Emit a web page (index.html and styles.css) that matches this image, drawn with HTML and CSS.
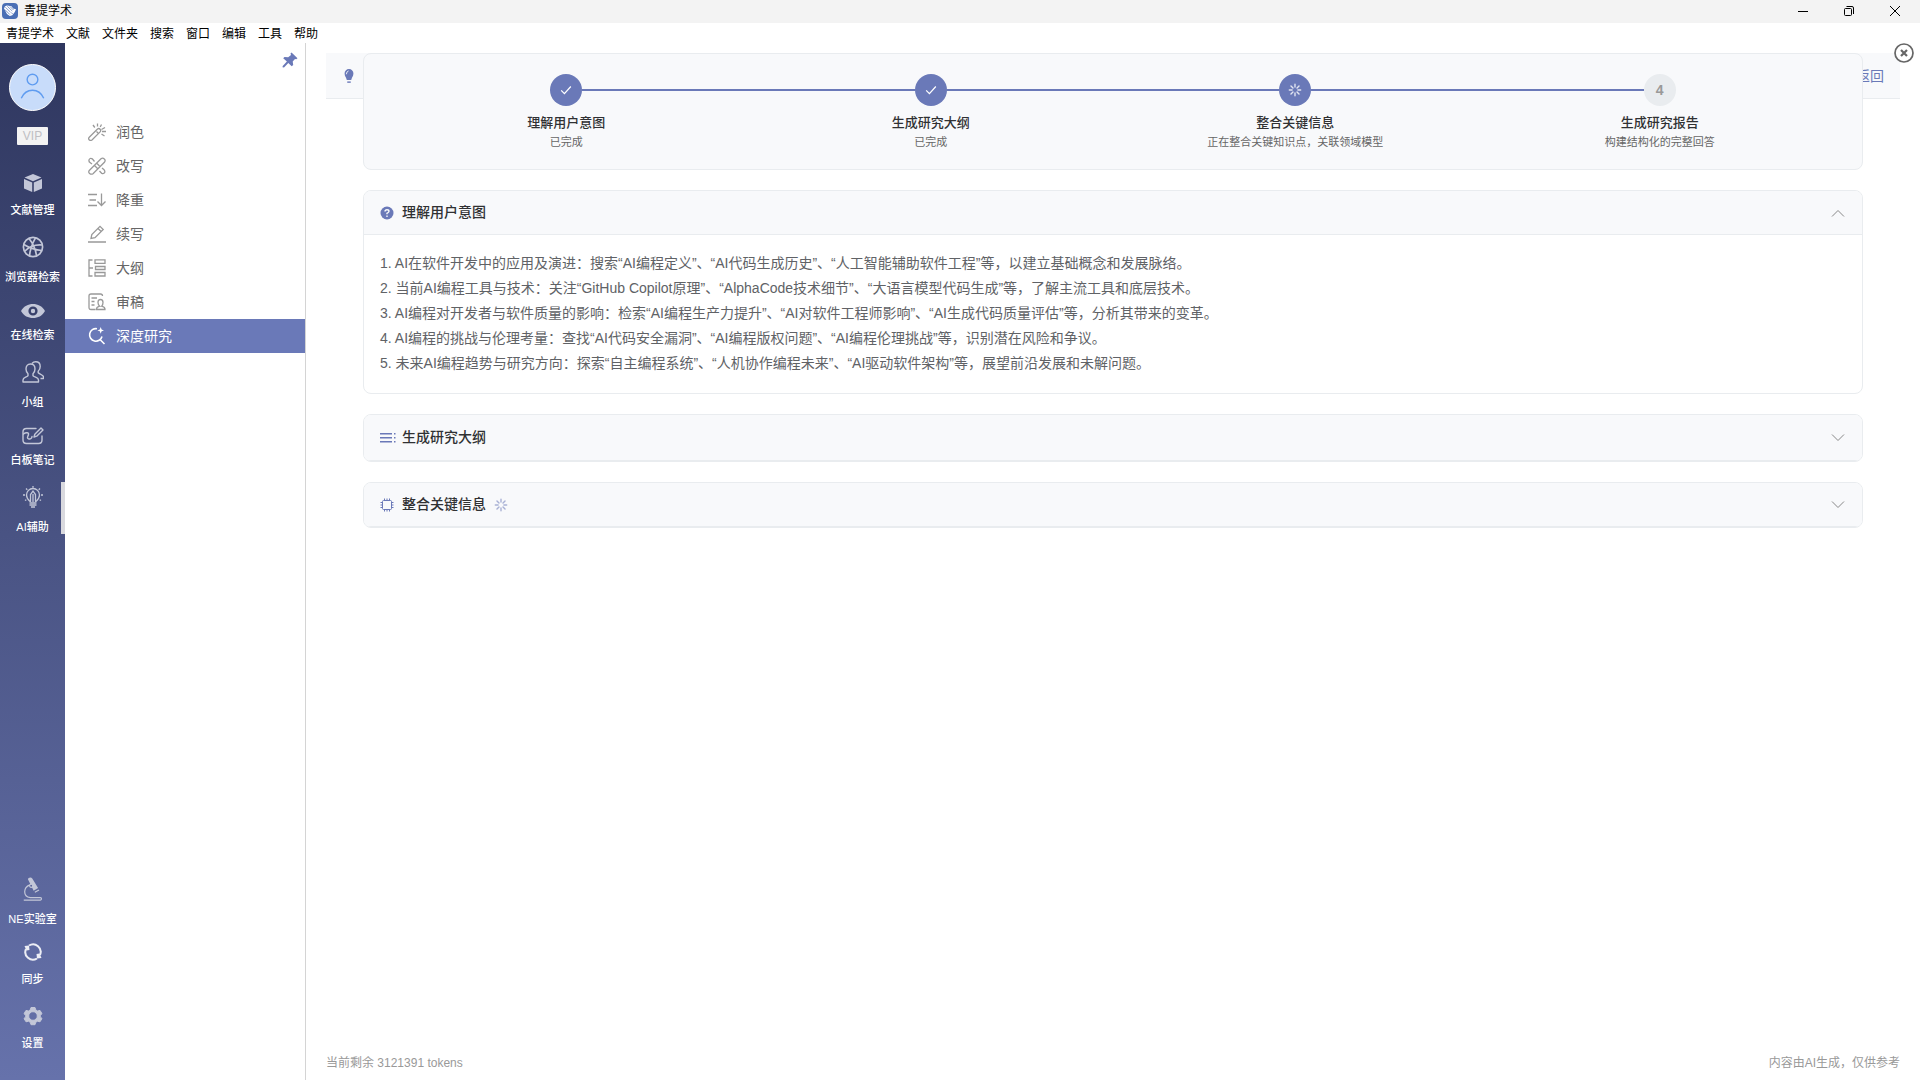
FILE: index.html
```html
<!DOCTYPE html>
<html lang="zh-CN">
<head>
<meta charset="utf-8">
<meta name="viewport" content="width=device-width, initial-scale=1">
<title>青提学术</title>
<link rel="stylesheet" href="styles.css">
</head>
<body>
<svg class="sprite" aria-hidden="true">
  <symbol id="spinner" viewBox="0 0 16 16">
    <g fill="none" stroke="currentColor" stroke-width="1.600" stroke-linecap="round" opacity=".8">
      <path d="M8 1.500v3.200M8 11.300v3.200M1.500 8h3.200M11.300 8h3.200M3.400 3.400l2.300 2.300M10.300 10.300l2.300 2.300M3.400 12.600l2.300-2.300M10.300 5.700l2.300-2.300"/>
    </g>
  </symbol>
  <symbol id="check" viewBox="0 0 16 16">
    <path d="M2.500 8.500l3.700 3.700L13.500 4" fill="none" stroke="currentColor" stroke-width="1.400"/>
  </symbol>
  <symbol id="chevron" viewBox="0 0 16 16">
    <path d="M2 4.500l6 6 6-6" fill="none" stroke="currentColor" stroke-width="1"/>
  </symbol>
</svg>

<header class="titlebar">
  <svg class="app-logo" viewBox="0 0 16 16"><rect width="16" height="16" rx="4" fill="#4a6fb5"/><path d="M2 5.500L3 3.300l2-.8 4.500.7 1.700 2.300 2.800.8L12.800 9l-2.500 3.200-2.500.8L5 11z" fill="#fff"/><path d="M3.300 4.200l5.200 5M5.300 3.300l5 4.700M2.800 6.500l5 5M8 3.500l3.500 3.500M9.300 9.800l1.500 1" stroke="#4a6fb5" stroke-width=".7"/></svg>
  <span class="app-name">青提学术</span>
  <div class="window-controls">
    <button type="button" aria-label="最小化"><svg viewBox="0 0 12 12"><path d="M1 6.500h10" /></svg></button>
    <button type="button" aria-label="还原"><svg viewBox="0 0 12 12"><rect x="1.500" y="3.500" width="7" height="7" rx="1"/><path d="M3.500 1.500h5.500q1.500 0 1.500 1.500v6"/></svg></button>
    <button type="button" aria-label="关闭"><svg viewBox="0 0 12 12"><path d="M1 1l10 10M11 1L1 11"/></svg></button>
  </div>
</header>

<nav class="menubar" aria-label="菜单">
  <button type="button">青提学术</button>
  <button type="button">文献</button>
  <button type="button">文件夹</button>
  <button type="button">搜索</button>
  <button type="button">窗口</button>
  <button type="button">编辑</button>
  <button type="button">工具</button>
  <button type="button">帮助</button>
</nav>

<div class="workspace">
  <aside class="sidebar">
    <button class="avatar" type="button" aria-label="账户"><svg viewBox="0 0 48 48"><g fill="none" stroke="#5f9cf0" stroke-width="1.500"><circle cx="24" cy="15.500" r="5.700"/><path d="M12 35.500C14.500 30 19 27 24 27s9.500 3 12 8.500"/></g></svg></button>
    <span class="vip">VIP</span>
    <nav class="side-group" aria-label="主导航">
      <a class="side-item mid" href="#library">
        <svg width="18" height="18" viewBox="0 0 18 18" fill="currentColor"><path d="M9 0l8.500 3.500L9 7.200.5 3.500zM0 5l8.200 3.600V18L0 14.500zM18 5L9.800 8.600V18l8.200-3.500z"/></svg>
        <span>文献管理</span></a>
      <a class="side-item tall" href="#browser">
        <svg width="22" height="22" viewBox="0 0 22 22" fill="none" stroke="currentColor" stroke-width="1.700"><circle cx="11" cy="11" r="9.600"/><path d="M13.500 1.800C10 8 8 13 7.500 20M1.800 8.500c5 3 11 5.500 18 6M7 2.500c4 5 6.500 10 7.500 17M20 9c-6-.5-12 1-17 6"/></svg>
        <span>浏览器检索</span></a>
      <a class="side-item" href="#online">
        <svg width="24" height="16" viewBox="0 0 24 16"><path d="M0 8C3 3 7 1 12 1s9 2 12 7c-3 5-7 7-12 7S3 13 0 8z" fill="currentColor"/><circle cx="12" cy="8" r="3.400" fill="none" stroke="#38406b" stroke-width="2.400"/></svg>
        <span>在线检索</span></a>
      <a class="side-item tall" href="#group">
        <svg width="22" height="22" viewBox="0 0 22 22" fill="none" stroke="currentColor" stroke-width="1.400" stroke-linejoin="round"><path d="M8.500 3C5.500 3 4 5 4 8c0 2 .8 3.600 2 4.700v2C4 16.500 1 16.500 1 19v2h15.500v-2c0-2.500-3.500-2.500-5.500-4.300v-2C12.200 11.600 13 10 13 8c0-3-1.500-5-4.500-5z"/><path d="M10 2.500C11 1.300 12.300.8 13.700.8c3 0 4.500 2 4.500 4.700 0 2-.8 3.700-2 4.700v1.600c1.500 1.700 5.300 1.700 5.300 4.200v1.500h-3"/></svg>
        <span>小组</span></a>
      <a class="side-item" href="#whiteboard">
        <svg width="22" height="18" viewBox="0 0 22 18" fill="none" stroke="currentColor" stroke-width="1.400" stroke-linecap="round" stroke-linejoin="round"><path d="M14 1.500H4.500Q1 1.500 1 5v8q0 3.500 3.500 3.500h12Q20 16.500 20 13V9"/><path d="M1.500 7C4 5 7 5.500 6.500 7.500S4.500 11 6.500 11.800 10 11 10 9.500M12 10l.8-2.800L19 1l2 2-6.300 6.200z"/></svg>
        <span>白板笔记</span></a>
      <a class="side-item tall active" href="#ai" aria-current="page">
        <svg width="22" height="22" viewBox="0 0 22 22" fill="none" stroke="currentColor" stroke-width="1.300"><path d="M8 15.500C5.800 13.500 4.500 11.500 4.500 9a6.500 6.500 0 0 1 13 0c0 2.500-1.300 4.500-3.500 6.500"/><path d="M8.500 16V8.500L11 5l2.500 3.500V16M11 8v8M7.500 17h7M7.500 19h7M9 21h4"/><path d="M11 0v1.700M1 9h2M19 9h2M4 2.500l1.300 1.300M18 2.500l-1.300 1.300M3 14.500l1.300-.8M19 14.500l-1.300-.8"/></svg>
        <span>AI辅助</span></a>
    </nav>
    <nav class="side-group bottom" aria-label="工具">
      <a class="side-item tall" href="#lab">
        <svg width="20" height="26" viewBox="0 0 20 26"><path d="M4.500 2.500C4.500.5 8-.5 9.200 1.500L15.500 12l-4.800 2.800z" fill="currentColor"/><g fill="none" stroke="currentColor" stroke-width="1.300"><path d="M12 16.500l4.500-2.500M6.500 8.500C3 10 1 12.700 1 16c0 3.500 2.500 5.800 6 6.300h11q1.200 0 1.200 1.300T18 25H0"/><circle cx="8" cy="9.500" r="1.700" fill="#5a659b"/></g></svg>
        <span>NE实验室</span></a>
      <a class="side-item mid bright" href="#sync">
        <svg width="18" height="18" viewBox="0 0 18 18"><path d="M5 2.500A7.600 7.600 0 0 1 16 12M13 15.500A7.600 7.600 0 0 1 2 6" fill="none" stroke="currentColor" stroke-width="2"/><path d="M.5 3L5 2.500l.5 4.500-3 .5zM17.500 15l-4.500.5-.5-4.500 3-.5z" fill="currentColor"/></svg>
        <span>同步</span></a>
      <a class="side-item mid spaced" href="#settings">
        <svg width="20" height="20" viewBox="0 0 20 20"><path fill="currentColor" stroke="currentColor" stroke-linejoin="round" fill-rule="evenodd" d="M8 1.500h4l.8 2.500 1.700 1 2.500-.6 2 3.300-1.700 1.600v1.600l1.700 1.600-2 3.300-2.500-.6-1.700 1-.8 2.500H8l-.8-2.500-1.700-1-2.500.6-2-3.300 1.700-1.600V9.300L1 7.700l2-3.300 2.500.6 1.700-1zM10 5.700a4.300 4.300 0 1 0 0 8.600 4.300 4.300 0 0 0 0-8.600z"/></svg>
        <span>设置</span></a>
    </nav>
  </aside>

  <aside class="toolnav">
    <button class="pin" type="button" aria-label="固定"><svg viewBox="0 0 16 16" fill="currentColor"><path d="M9.500.5l6 5.700-1.300 1-1.200-.3-2.300 2.600.5 3.500-1.500 1.300-3.400-3.400L2 15.500.5 15.300.7 14l4.200-4.500L1.200 6.300 2.500 5l3.700.3L9 3 8.500 1.500z"/></svg></button>
    <nav class="tool-list" aria-label="AI辅助">
      <a href="#polish"><svg viewBox="0 0 18 18"><path d="M1 14.500L9.500 6q1.500-1 2.600.2t.2 2.500L4 17q-1.500 1-2.700-.1T1 14.500zM8.500 8.500l1.500 1.500M5 2l1.800 2.500M9.500.5V3.500M13.500 1.500l-1.300 2.500M13.500 6.500L17 4.500M14 8.500h4M13.500 11l3 2"/></svg>润色</a>
      <a href="#rewrite"><svg viewBox="0 0 18 18"><path d="M1.500 13.300L13 1.700q1.700-1.200 3.300.2t.1 3.400L5 16.700q-1.700 1.100-3.400-.3t-.1-3.100zM6.500 4.500L4.300 1.800Q1.800.6 1 3q-.3 1.700 1 2.500l2 1.500M11.500 14l2.300 2.500q2.200.7 3-1.200.3-1.600-1-2.800L14 11M6.500 8.500l3 3M9 6.500l2.500 2.500"/></svg>改写</a>
      <a href="#reduce"><svg viewBox="0 0 18 18"><path d="M0 3.500h9M1.500 9H8M0 14.500h9M13.500 2.500v12M9.500 10.500l4 4 4-4"/></svg>降重</a>
      <a href="#continue"><svg viewBox="0 0 18 18"><path d="M3 13.500l.8-4L12 1.300l3.200 3.200L7 12.700zM10 3.500l3.200 3M0 17h18"/></svg>续写</a>
      <a href="#outline"><svg viewBox="0 0 18 18"><path d="M4.500 1H1v16h3.500M1 9h4M7 .8h10v3.500H7zM7.500 7.500H17v3H7.500zM7 13.500h10V17H7z"/></svg>大纲</a>
      <a href="#review"><svg viewBox="0 0 18 18"><path d="M7.500 16.500H3q-2 0-2-2V3q0-2 2-2h9.500q2 0 2 2M3.500 5H9M3.500 8.500h3M3.500 12h3M8.500 16.500q-.3-2.300 3.200-3.300Q10 11.800 10 9.500 10 6.500 12.500 6.500T15 9.500q0 2.300-1.300 3.700 3.500 1 3.300 3.300z"/></svg>审稿</a>
      <a class="selected" href="#research" aria-current="page"><svg viewBox="0 0 18 18"><path d="M9 1.700A6.300 6.300 0 1 0 14 9.500M12 12.500l4.500 4.500" stroke-width="1.600"/><path d="M12.700 0l.9 2.500 2.400.9-2.400.9-.9 2.500-.9-2.500-2.400-.9 2.400-.9z" fill="currentColor" stroke="none"/></svg>深度研究</a>
    </nav>
  </aside>

  <main class="main">
    <button class="close-panel" type="button" aria-label="关闭面板"><svg viewBox="0 0 20 20"><circle cx="10" cy="10" r="9" fill="#fff" stroke="#666" stroke-width="1.700"/><path d="M7 7l6 6M13 7l-6 6" stroke="#666" stroke-width="2.200"/></svg></button>
    <div class="stage">
      <div class="topbar">
        <svg class="bulb" viewBox="0 0 14 16"><path d="M7 0a5 5 0 0 1 5 5.400c0 2.500-1.500 3.700-2 5.800L9.500 12.500h-5L4 11.200C3.500 9.100 2 7.900 2 5.400A5 5 0 0 1 7 0z" fill="currentColor"/><path d="M4 6q0-3 2.500-3.800" fill="none" stroke="#f8f9fb"/><path d="M5 15h4" stroke="currentColor" stroke-width="1.600"/></svg>
        <a class="back" href="#back">返回</a>
      </div>
      <div class="content">
        <ol class="steps card">
          <li class="step"><div class="rail"><span class="dot done"><svg><use href="#check"/></svg></span></div><strong>理解用户意图</strong><small>已完成</small></li>
          <li class="step"><div class="rail"><span class="dot done"><svg><use href="#check"/></svg></span></div><strong>生成研究大纲</strong><small>已完成</small></li>
          <li class="step"><div class="rail"><span class="dot done"><svg><use href="#spinner"/></svg></span></div><strong>整合关键信息</strong><small>正在整合关键知识点，关联领域模型</small></li>
          <li class="step"><div class="rail"><span class="dot">4</span></div><strong>生成研究报告</strong><small>构建结构化的完整回答</small></li>
        </ol>

        <section class="card">
          <button class="card-head" type="button" aria-expanded="true">
            <svg class="head-icon" viewBox="0 0 14 14"><circle cx="7" cy="7" r="6.500" fill="currentColor"/><path d="M5 5.500Q5 3.700 7 3.700t2 1.600Q9 6.300 7 7.300v1M7 9.500V11" fill="none" stroke="#f8f9fb" stroke-width="1.400"/></svg>
            <span class="head-title">理解用户意图</span>
            <svg class="chevron up"><use href="#chevron"/></svg>
          </button>
          <div class="card-body">
            <p>1. AI在软件开发中的应用及演进：搜索“AI编程定义”、“AI代码生成历史”、“人工智能辅助软件工程”等，以建立基础概念和发展脉络。</p>
            <p>2. 当前AI编程工具与技术：关注“GitHub Copilot原理”、“AlphaCode技术细节”、“大语言模型代码生成”等，了解主流工具和底层技术。</p>
            <p>3. AI编程对开发者与软件质量的影响：检索“AI编程生产力提升”、“AI对软件工程师影响”、“AI生成代码质量评估”等，分析其带来的变革。</p>
            <p>4. AI编程的挑战与伦理考量：查找“AI代码安全漏洞”、“AI编程版权问题”、“AI编程伦理挑战”等，识别潜在风险和争议。</p>
            <p>5. 未来AI编程趋势与研究方向：探索“自主编程系统”、“人机协作编程未来”、“AI驱动软件架构”等，展望前沿发展和未解问题。</p>
          </div>
        </section>

        <section class="card">
          <button class="card-head large" type="button" aria-expanded="false">
            <svg class="head-icon" viewBox="0 0 16 16"><g fill="currentColor"><path d="M0 3h12v1.500H0zM0 7h12v1.500H0zM0 11h12v1.500H0zM14 3h1.500v1.500H14zM14 7h1.500v1.500H14zM14 11h1.500v1.500H14z"/></g></svg>
            <span class="head-title">生成研究大纲</span>
            <svg class="chevron"><use href="#chevron"/></svg>
          </button>
        </section>

        <section class="card">
          <button class="card-head" type="button" aria-expanded="false">
            <svg class="head-icon" viewBox="0 0 14 14"><rect x="2.500" y="2.500" width="9" height="9" rx="1" fill="none" stroke="currentColor"/><path d="M4.500.5V2M7 .5V2M9.500.5V2M4.500 12v1.500M7 12v1.500M9.500 12v1.500M.5 4.500H2M.5 7H2M.5 9.500H2M12 4.500h1.500M12 7h1.500M12 9.500h1.500" stroke="currentColor"/></svg>
            <span class="head-title">整合关键信息</span>
            <svg class="busy"><use href="#spinner"/></svg>
            <svg class="chevron"><use href="#chevron"/></svg>
          </button>
        </section>
      </div>
    </div>
    <footer class="status">
      <span>当前剩余 3121391 tokens</span>
      <span>内容由AI生成，仅供参考</span>
    </footer>
  </main>
</div>
</body>
</html>
```
FILE: styles.css
```css
:root {
  --accent: #6a79b8;
  --panel: #f8f9fb;
  --line: #e9ecef;
  --text: #303133;
  --muted: #606266;
}

* {
  box-sizing: border-box;
}

body {
  margin: 0;
  min-height: 100vh;
  display: flex;
  flex-direction: column;
  background: #fff;
  color: #000;
  font: 12px/16px "Liberation Sans", "Noto Sans CJK SC", sans-serif;
}

button {
  padding: 0;
  border: 0;
  background: none;
  color: inherit;
  font: inherit;
}

a {
  color: inherit;
  text-decoration: none;
}

svg {
  display: block;
  flex: none;
}

.sprite {
  position: absolute;
  width: 0;
  height: 0;
}

/* Window frame */
.titlebar {
  display: flex;
  align-items: center;
  gap: 6px;
  height: 23px;
  padding: 0 2px 2px;
  background: #f3f3f3;
}

.app-logo {
  width: 16px;
  height: 16px;
}

.window-controls {
  display: flex;
  margin-left: auto;
}

.window-controls button {
  display: flex;
  align-items: center;
  justify-content: center;
  width: 46px;
  height: 20px;
}

.window-controls svg {
  width: 12px;
  height: 12px;
  fill: none;
  stroke: #000;
  stroke-width: 1;
}

.menubar {
  display: flex;
  align-items: center;
  gap: 12px;
  height: 20px;
  padding: 2px 6px 0;
}

.workspace {
  flex: 1;
  display: flex;
}

/* Primary sidebar */
.sidebar {
  display: flex;
  flex-direction: column;
  align-items: center;
  width: 65px;
  padding: 21px 0 30px;
  background: linear-gradient(#2f375f, #6672ab);
  color: #fff;
}

.avatar {
  width: 47px;
  height: 47px;
  border: 1px solid #fff;
  border-radius: 50%;
  background: #c8dcfa;
}

.vip {
  width: 31px;
  margin: 16px 0 26px;
  border-radius: 1px;
  background: #f3f3f3;
  color: #bfbfc3;
  font-size: 12px;
  line-height: 18px;
  text-align: center;
}

.side-group {
  display: flex;
  flex-direction: column;
  gap: 15px;
  width: 100%;
}

.side-group.bottom {
  gap: 14px;
  margin-top: auto;
}

.side-item {
  display: flex;
  flex-direction: column;
  align-items: center;
  gap: 5px;
  font-size: 11px;
  font-weight: 500;
  line-height: 14px;
  white-space: nowrap;
}

.side-item svg {
  height: 24px;
  color: #c3c7d8;
}

.side-item.bright svg {
  color: #eceef5;
}

.side-item.mid {
  gap: 8px;
}

.side-item.tall {
  gap: 11px;
  padding-top: 3px;
}

.side-item.spaced {
  padding-top: 4px;
}

.side-item.active {
  border-right: 4px solid #d9d9de;
  padding-left: 4px;
}

/* Secondary navigation */
.toolnav {
  width: 241px;
  border-right: 1px solid #d4d4d4;
}

.pin {
  display: block;
  margin: 9px 7px 0 auto;
  color: var(--accent);
}

.pin svg {
  width: 16px;
  height: 16px;
}

.tool-list {
  padding-top: 47px;
}

.tool-list a {
  display: flex;
  align-items: center;
  gap: 10px;
  height: 34px;
  padding-left: 23px;
  color: #666;
  font-size: 14px;
}

.tool-list svg {
  width: 18px;
  height: 18px;
  fill: none;
  stroke: #999;
  stroke-width: 1.3;
}

.tool-list .selected {
  background: var(--accent);
  color: #fff;
}

.tool-list .selected svg {
  stroke: #fff;
}

/* Main area */
.main {
  position: relative;
  flex: 1;
  display: flex;
  flex-direction: column;
  min-width: 0;
  padding: 10px 20px 8px;
}

.close-panel {
  position: absolute;
  top: 0;
  right: 6px;
  z-index: 1;
}

.close-panel svg {
  width: 20px;
  height: 20px;
}

.stage {
  display: grid;
  align-items: start;
}

.topbar,
.content {
  grid-area: 1 / 1;
}

.topbar {
  display: flex;
  align-items: center;
  justify-content: space-between;
  height: 46px;
  padding: 0 16px;
  border-bottom: 1px solid var(--line);
  background: var(--panel);
  color: var(--accent);
  font-size: 14px;
}

.bulb {
  width: 14px;
  height: 14px;
}

.content {
  display: flex;
  flex-direction: column;
  gap: 20px;
  width: 100%;
  max-width: 1500px;
  margin: 0 auto;
}

.card {
  border: 1px solid var(--line);
  border-radius: 8px;
  background: #fff;
  overflow: hidden;
}

/* Progress steps */
.steps {
  display: flex;
  margin: 0;
  padding: 20px 20px 19px;
  background: var(--panel);
  list-style: none;
}

.step {
  flex: 1;
  display: flex;
  flex-direction: column;
  text-align: center;
}

.rail {
  display: flex;
  align-items: center;
  margin-bottom: 8px;
}

.rail::before,
.rail::after {
  content: "";
  flex: 1;
  height: 2px;
  background: var(--accent);
}

.step:first-child .rail::before,
.step:last-child .rail::after {
  background: none;
}

.dot {
  display: flex;
  align-items: center;
  justify-content: center;
  width: 32px;
  height: 32px;
  border-radius: 50%;
  background: #e9ecef;
  color: #999;
  font-size: 14px;
  font-weight: 700;
}

.dot.done {
  background: var(--accent);
  color: #fff;
}

.dot svg {
  width: 14px;
  height: 14px;
}

.step strong {
  margin-bottom: 2px;
  color: var(--text);
  font-size: 13px;
  font-weight: 500;
  line-height: 18px;
}

.step small {
  color: #666;
  font-size: 11px;
  line-height: 16px;
}

/* Collapsible sections */
.card-head {
  display: flex;
  align-items: center;
  gap: 8px;
  width: 100%;
  padding: 12px 16px;
  border-bottom: 1px solid var(--line);
  background: var(--panel);
  color: var(--text);
  font-size: 14px;
  font-weight: 500;
  line-height: 19px;
  text-align: left;
}

.card-head.large {
  gap: 6px;
  padding: 13px 16px;
}

.head-icon,
.busy {
  width: 14px;
  height: 14px;
  color: var(--accent);
}

.large .head-icon {
  width: 16px;
  height: 16px;
}

.busy {
  opacity: 0.7;
}

.chevron {
  width: 16px;
  height: 16px;
  margin-left: auto;
  color: #888;
}

.chevron.up {
  transform: rotate(180deg);
}

.card-body {
  padding: 16px 16px 17px;
  color: var(--muted);
  font-size: 14px;
  line-height: 25px;
}

.card-body p {
  margin: 0;
}

.status {
  display: flex;
  justify-content: space-between;
  margin-top: auto;
  color: #999;
  line-height: 18px;
}
```
